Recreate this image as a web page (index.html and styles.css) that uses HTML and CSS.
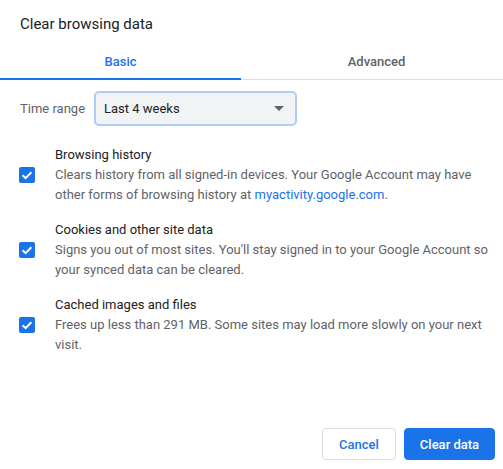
FILE: index.html
```html
<!DOCTYPE html>
<html lang="en">
<head>
<meta charset="utf-8">
<title>Clear browsing data</title>
<link rel="stylesheet" href="styles.css">
</head>
<body>
<div class="dialog">
  <h1 class="title">Clear browsing data</h1>
  <div class="tabs">
    <div class="tab tab-active">Basic</div>
    <div class="tab">Advanced</div>
  </div>
  <div class="time-row">
    <span class="time-label">Time range</span>
    <div class="select">
      <span>Last 4 weeks</span>
      <span class="arrow"></span>
    </div>
  </div>
  <div class="options">
    <div class="option">
      <span class="checkbox"><svg viewBox="0 0 16 16" width="16" height="16"><path d="M3.6 8.2 L6.6 11.1 L12.4 5.2" fill="none" stroke="#fff" stroke-width="2"/></svg></span>
      <div class="option-text">
        <div class="option-title">Browsing history</div>
        <div class="option-desc">Clears history from all signed-in devices. Your Google Account may have other forms of browsing history at <a class="link" href="#">myactivity.google.com</a>.</div>
      </div>
    </div>
    <div class="option">
      <span class="checkbox"><svg viewBox="0 0 16 16" width="16" height="16"><path d="M3.6 8.2 L6.6 11.1 L12.4 5.2" fill="none" stroke="#fff" stroke-width="2"/></svg></span>
      <div class="option-text">
        <div class="option-title">Cookies and other site data</div>
        <div class="option-desc">Signs you out of most sites. You'll stay signed in to your Google Account so your synced data can be cleared.</div>
      </div>
    </div>
    <div class="option">
      <span class="checkbox"><svg viewBox="0 0 16 16" width="16" height="16"><path d="M3.6 8.2 L6.6 11.1 L12.4 5.2" fill="none" stroke="#fff" stroke-width="2"/></svg></span>
      <div class="option-text">
        <div class="option-title">Cached images and files</div>
        <div class="option-desc">Frees up less than 291 MB. Some sites may load more slowly on your next visit.</div>
      </div>
    </div>
  </div>
  <div class="footer">
    <button class="btn btn-cancel">Cancel</button>
    <button class="btn btn-primary">Clear data</button>
  </div>
</div>
</body>
</html>
```
FILE: styles.css
```css
html, body {
  margin: 0;
  padding: 0;
  overflow: hidden;
  background: #fff;
}
body {
  font-family: Roboto, "Liberation Sans", Arial, sans-serif;
  font-size: 13px;
  color: #202124;
}
.dialog {
  width: 503px;
  height: 469px;
  display: flex;
  flex-direction: column;
  overflow: hidden;
}
.title {
  margin: 0;
  padding: 14px 20px 0;
  height: 28px;
  font-size: 15px;
  font-weight: 400;
  line-height: 20px;
  color: #202124;
}
.tabs {
  display: flex;
  height: 37px;
  border-bottom: 1px solid #dadce0;
  width: 512px;
}
.tab {
  flex: 0 0 271px;
  display: flex;
  align-items: center;
  justify-content: center;
  font-weight: 500;
  color: #5f6368;
  position: relative;
  padding-top: 1px;
  box-sizing: border-box;
}
.tab-active {
  flex: 0 0 241px;
  color: #1a73e8;
}
.tab-active::after {
  content: "";
  position: absolute;
  left: 0;
  right: 0;
  bottom: -1px;
  height: 2px;
  background: #1a73e8;
}
.time-row {
  display: flex;
  align-items: center;
  margin-top: 11px;
  padding-left: 20px;
}
.time-label {
  color: #5f6368;
  width: 74px;
}
.select {
  box-sizing: border-box;
  width: 203px;
  height: 35px;
  border: 2px solid #aecbfa;
  border-radius: 5px;
  background: #f1f3f4;
  display: flex;
  align-items: center;
  justify-content: space-between;
  padding: 0 8px 0 8px;
  color: #202124;
}
.arrow {
  width: 0;
  height: 0;
  border-left: 5px solid transparent;
  border-right: 5px solid transparent;
  border-top: 5px solid #5f6368;
  margin-right: 3px;
}
.options {
  margin-top: 19px;
  display: flex;
  flex-direction: column;
  gap: 15px;
}
.option {
  display: flex;
  align-items: center;
  padding-left: 19px;
}
.checkbox {
  width: 16px;
  height: 16px;
  background: #1a73e8;
  border-radius: 2px;
  flex: 0 0 16px;
  margin-right: 20px;
  display: flex;
}
.option-text {
  width: 437px;
  line-height: 20px;
}
.option-title {
  color: #202124;
}
.option-desc {
  color: #5f6368;
}
.link {
  color: #1a73e8;
  text-decoration: none;
}
.footer {
  margin-top: auto;
  display: flex;
  justify-content: flex-end;
  gap: 8px;
  padding: 0 8px 9px 0;
}
.btn {
  font-family: Roboto, "Liberation Sans", Arial, sans-serif;
  font-size: 13px;
  font-weight: 500;
  height: 32px;
  border-radius: 4px;
  padding: 0;
  box-sizing: border-box;
  white-space: nowrap;
  text-align: center;
}
.btn-cancel {
  width: 74px;
  background: #fff;
  color: #1a73e8;
  border: 1px solid #dadce0;
}
.btn-primary {
  width: 91px;
  background: #1a73e8;
  color: #fff;
  border: 1px solid #1a73e8;
}
```
